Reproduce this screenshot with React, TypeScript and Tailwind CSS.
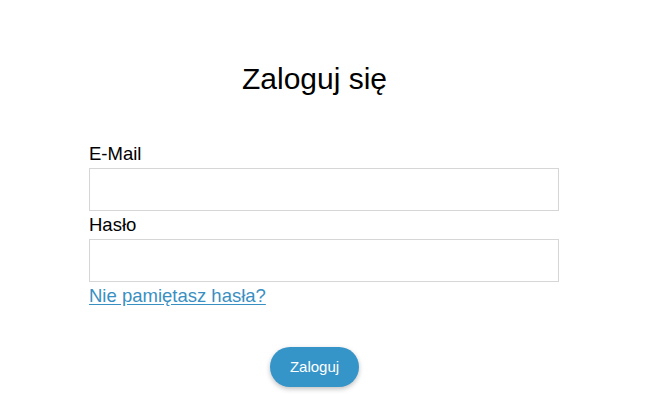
export default function App() {
  return (
    <div className="min-h-screen bg-white font-['Liberation_Sans',Arial,sans-serif] text-black">
      <div className="w-[629px] pt-[61px]">
        <h1 className="text-center text-[30px] leading-[36px] font-normal">Zaloguj się</h1>

        <form className="ml-[89px] mt-[43px] w-[470px] flex flex-col">
          <label className="text-[18.5px] leading-[28px]">E-Mail</label>
          <input
            type="email"
            className="h-[43px] w-full border border-[#d6d6d6] bg-white px-2 outline-none"
          />
          <label className="text-[18.5px] leading-[28px]">Hasło</label>
          <input
            type="password"
            className="h-[43px] w-full border border-[#d6d6d6] bg-white px-2 outline-none"
          />
          <a href="#" className="self-start text-[18.5px] leading-[28px] text-[#3a8fc2] underline underline-offset-2">
            Nie pamiętasz hasła?
          </a>
        </form>

        <div className="mt-[37px] flex justify-center">
          <button
            type="button"
            className="h-[40px] rounded-full bg-[#3594c8] px-5 text-[15px] text-white shadow-[0_2px_5px_rgba(0,0,0,0.25)]"
          >
            Zaloguj
          </button>
        </div>
      </div>
    </div>
  )
}
